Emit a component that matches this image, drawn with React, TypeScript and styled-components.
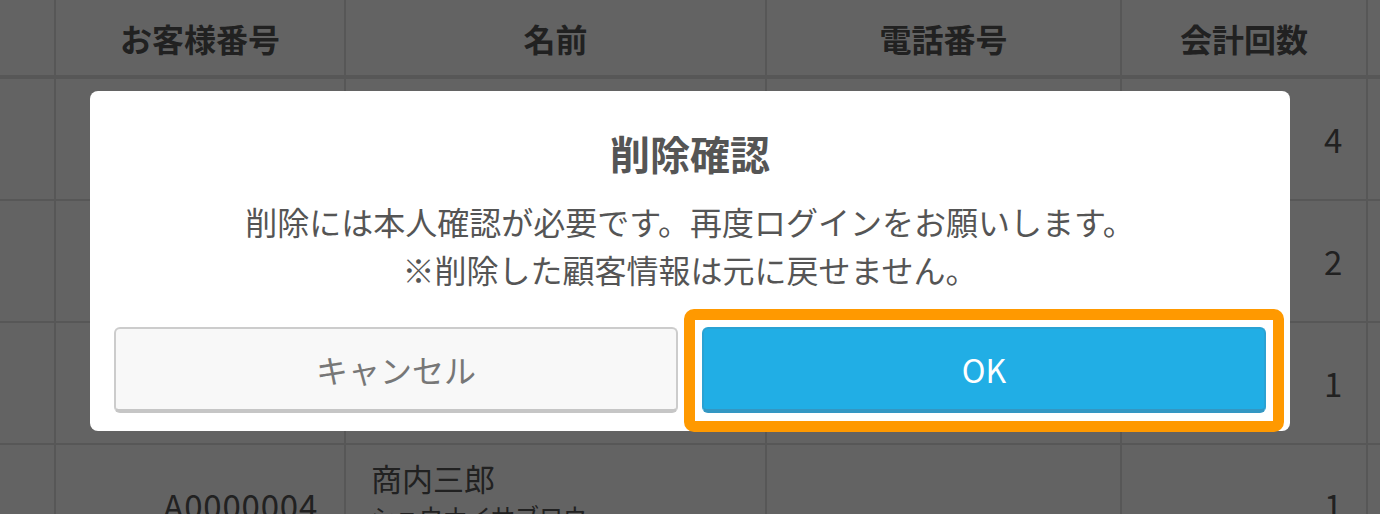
import React from "react";
import styled, { createGlobalStyle } from "styled-components";

const GlobalStyle = createGlobalStyle`
  html, body {
    margin: 0;
    padding: 0;
    background: #ffffff;
    overflow: hidden;
  }
  body {
    font-family: "Noto Sans CJK JP", "Noto Sans", sans-serif;
    color: #555555;
  }
  * {
    box-sizing: border-box;
  }
`;

const Page = styled.div`
  position: relative;
  width: 1380px;
  height: 514px;
  overflow: hidden;
`;

const Table = styled.div`
  display: grid;
  grid-template-columns: 56px 290px 421px 355px 246px 1fr;
  grid-auto-rows: 122px;
  grid-template-rows: 79px;
`;

const HeaderCell = styled.div`
  display: flex;
  align-items: center;
  justify-content: center;
  border-right: 2px solid #e0e0e0;
  border-bottom: 4px solid #e0e0e0;
  font-size: 32px;
  font-weight: 700;
  color: #575757;
`;

const Cell = styled.div<{ $align?: "left" | "right" }>`
  display: flex;
  flex-direction: column;
  justify-content: center;
  align-items: ${(p) => (p.$align === "right" ? "flex-end" : "flex-start")};
  padding: 0 25px;
  border-right: 2px solid #e0e0e0;
  border-bottom: 2px solid #e0e0e0;
  font-size: 31px;
  color: #555555;
  white-space: nowrap;
`;

const NumberCell = styled(Cell)<{ $pad?: number }>`
  font-size: 33px;
  letter-spacing: 0.8px;
  padding-right: ${(p) => p.$pad ?? 26}px;
`;

const NameCell = styled(Cell)`
  justify-content: flex-start;
  padding-top: 12px;
`;

const Name = styled.span`
  font-size: 31px;
  line-height: 42px;
`;

const Kana = styled.span`
  font-size: 24px;
  line-height: 34px;
`;

const Overlay = styled.div`
  position: absolute;
  inset: 0;
  background: rgba(0, 0, 0, 0.61);
  display: flex;
  justify-content: center;
  align-items: flex-start;
  padding-top: 91px;
`;

const Modal = styled.div`
  width: 1200px;
  background: #ffffff;
  border-radius: 8px;
  padding: 38px 24px 18px;
  display: flex;
  flex-direction: column;
  align-items: center;
`;

const Title = styled.h2`
  margin: 0;
  font-size: 40px;
  line-height: 48px;
  font-weight: 700;
  color: #555555;
`;

const Message = styled.p`
  margin: 20px 0 0;
  font-size: 32px;
  line-height: 48px;
  text-align: center;
  color: #555555;
`;

const Actions = styled.div`
  width: 100%;
  margin-top: 34px;
  display: grid;
  grid-template-columns: 1fr 1fr;
  gap: 24px;
`;

const Button = styled.button`
  height: 86px;
  width: 100%;
  border-radius: 6px;
  font-family: inherit;
  font-size: 32px;
  cursor: pointer;
`;

const CancelButton = styled(Button)`
  background: #f8f8f8;
  color: #777777;
  border: 2px solid #cccccc;
  border-bottom: 4px solid #c6c6c6;
`;

const OkButton = styled(Button)`
  background: #21aee5;
  color: #ffffff;
  border: 2px solid #2aa2d3;
  border-bottom: 4px solid #3397c3;
`;

const Highlight = styled.div`
  position: relative;

  &::after {
    content: "";
    position: absolute;
    inset: -18px -18px -19px -18px;
    border: 11px solid #ff9900;
    border-radius: 10px;
    pointer-events: none;
  }
`;

type Row = { id: string; name: string; kana: string; tel: string; count: number };

const rows: Row[] = [
  { id: "A0000001", name: "商内太郎", kana: "ショウナイタロウ", tel: "", count: 4 },
  { id: "A0000002", name: "商内花子", kana: "ショウナイハナコ", tel: "", count: 2 },
  { id: "A0000003", name: "商内次郎", kana: "ショウナイジロウ", tel: "", count: 1 },
  { id: "A0000004", name: "商内三郎", kana: "ショウナイサブロウ", tel: "", count: 1 },
];

const headers = ["", "お客様番号", "名前", "電話番号", "会計回数", ""];

export default function App() {
  return (
    <Page>
      <GlobalStyle />
      <Table>
        {headers.map((h, i) => (
          <HeaderCell key={i}>{h}</HeaderCell>
        ))}
        {rows.map((r) => (
          <React.Fragment key={r.id}>
            <Cell />
            <NumberCell $align="right">{r.id}</NumberCell>
            <NameCell>
              <Name>{r.name}</Name>
              <Kana>{r.kana}</Kana>
            </NameCell>
            <Cell>{r.tel}</Cell>
            <NumberCell $align="right" $pad={23}>
              {r.count}
            </NumberCell>
            <Cell />
          </React.Fragment>
        ))}
      </Table>
      <Overlay>
        <Modal>
          <Title>削除確認</Title>
          <Message>
            削除には本人確認が必要です。再度ログインをお願いします。
            <br />
            ※削除した顧客情報は元に戻せません。
          </Message>
          <Actions>
            <CancelButton>キャンセル</CancelButton>
            <Highlight>
              <OkButton>OK</OkButton>
            </Highlight>
          </Actions>
        </Modal>
      </Overlay>
    </Page>
  );
}
